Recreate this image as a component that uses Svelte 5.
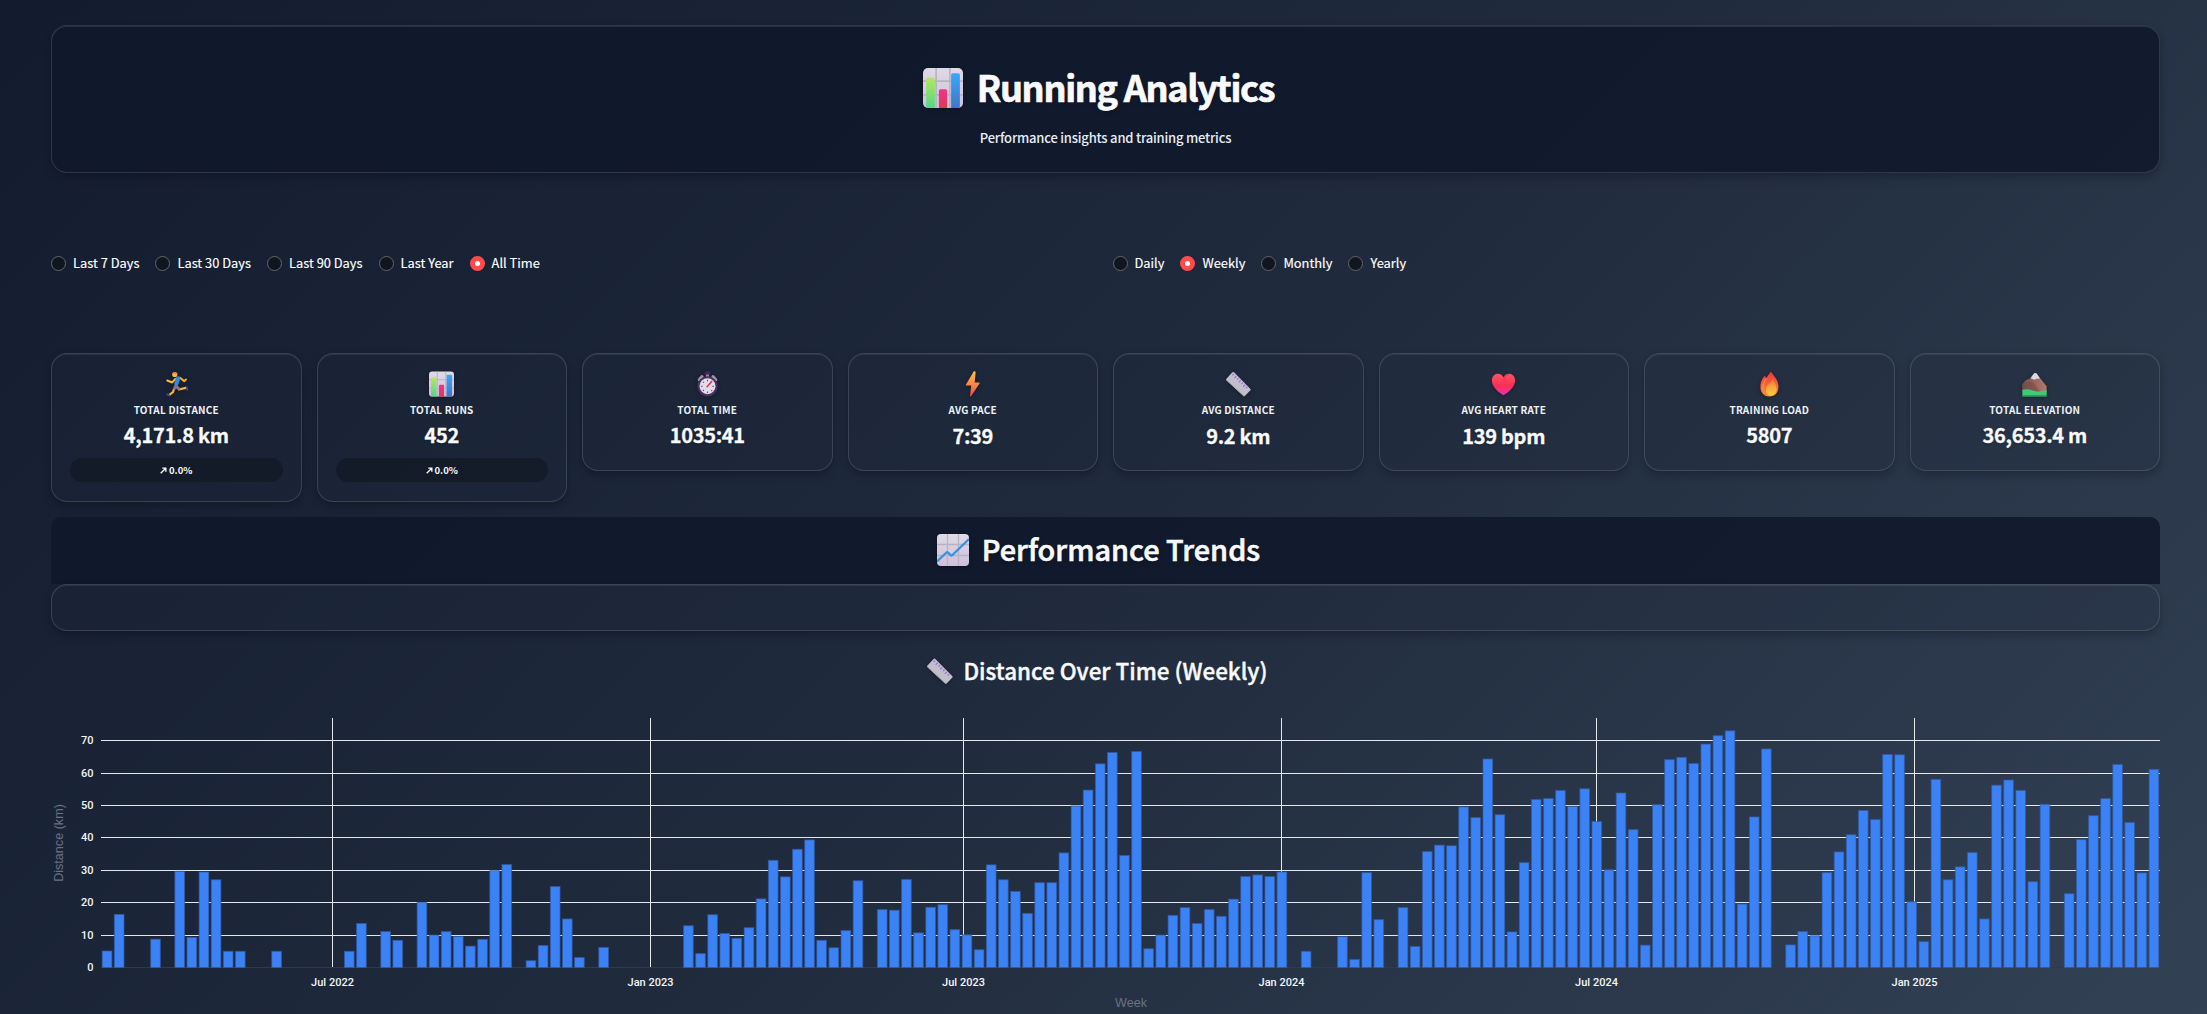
<script>
  const ranges = ['Last 7 Days', 'Last 30 Days', 'Last 90 Days', 'Last Year', 'All Time'];
  const periods = ['Daily', 'Weekly', 'Monthly', 'Yearly'];
  let range = $state('All Time');
  let period = $state('Weekly');

  const metrics = [
    { icon: 'runner', label: 'Total Distance', value: '4,171.8 km', trend: '0.0%' },
    { icon: 'bars', label: 'Total Runs', value: '452', trend: '0.0%' },
    { icon: 'clock', label: 'Total Time', value: '1035:41' },
    { icon: 'bolt', label: 'Avg Pace', value: '7:39', low: true },
    { icon: 'ruler', label: 'Avg Distance', value: '9.2 km', low: true },
    { icon: 'heart', label: 'Avg Heart Rate', value: '139 bpm', low: true },
    { icon: 'fire', label: 'Training Load', value: '5807' },
    { icon: 'mountain', label: 'Total Elevation', value: '36,653.4 m' }
  ];

  // Weekly distance in km, one entry per week
  const weeks = [
    5.1, 16.4, 0, 0, 8.75, 0, 29.7, 9.3, 29.5, 27.1, 5, 5, 0, 0, 5, 0, 0, 0, 0, 0,
    5, 13.6, 0, 11.1, 8.4, 0, 20.1, 10, 11.1, 9.6, 6.6, 8.7, 29.9, 31.8, 0, 2.1, 6.8, 25, 15, 3.1,
    0, 6.2, 0, 0, 0, 0, 0, 0, 12.9, 4.3, 16.3, 10.5, 9, 12.3, 21.2, 33.1, 28, 36.5, 39.4, 8.4,
    6.1, 11.4, 26.8, 0, 17.9, 17.7, 27.2, 10.7, 18.6, 19.4, 11.7, 10.1, 5.5, 31.7, 27.1, 23.5, 16.7, 26.2, 26.2, 35.4,
    49.9, 54.8, 62.9, 66.4, 34.6, 66.7, 5.8, 10, 16.1, 18.5, 13.6, 17.9, 15.8, 21.1, 28.1, 28.6, 28.1, 29.5, 0, 5,
    0, 0, 9.5, 2.5, 29.3, 14.8, 0, 18.5, 6.5, 35.8, 37.8, 37.6, 49.6, 46.3, 64.4, 47.2, 11, 32.4, 51.9, 52.2,
    54.7, 49.8, 55.2, 45.1, 30.2, 53.9, 42.6, 6.9, 50.3, 64.2, 64.9, 63, 69, 71.6, 73.1, 19.6, 46.5, 67.5, 0, 7,
    11.1, 9.8, 29.3, 35.7, 41, 48.5, 45.7, 65.8, 65.7, 20.3, 8, 58.1, 27.1, 31.1, 35.5, 15, 56.3, 57.9, 54.7, 26.5,
    50.4, 0, 22.8, 39.5, 46.9, 52.2, 62.7, 44.8, 29.2, 61.2
  ];
  const left = 50;
  const right = 2109;
  const base = 267;
  const perKm = 32.38 / 10;
  const step = (right - left) / weeks.length;
  const barWidth = step * 0.8;
  const yTicks = [0, 10, 20, 30, 40, 50, 60, 70];
  const xTicks = [
    { x: 281.5, label: 'Jul 2022' },
    { x: 599.5, label: 'Jan 2023' },
    { x: 912.5, label: 'Jul 2023' },
    { x: 1230.5, label: 'Jan 2024' },
    { x: 1545.5, label: 'Jul 2024' },
    { x: 1863.5, label: 'Jan 2025' }
  ];
</script>

<svg class="defs" aria-hidden="true">
  <defs>
    <linearGradient id="paper" x1="0" y1="0" x2="0" y2="1"><stop offset="0" stop-color="#dfdae6" /><stop offset="1" stop-color="#cfc0dc" /></linearGradient>
    <linearGradient id="green" x1="0" y1="0" x2="0" y2="1"><stop offset="0" stop-color="#b5e85a" /><stop offset="1" stop-color="#52d68b" /></linearGradient>
    <linearGradient id="pink" x1="0" y1="0" x2="0" y2="1"><stop offset="0" stop-color="#ee3390" /><stop offset="1" stop-color="#de3a55" /></linearGradient>
    <linearGradient id="blue" x1="0" y1="0" x2="0" y2="1"><stop offset="0" stop-color="#3aa7fb" /><stop offset="1" stop-color="#3e76c9" /></linearGradient>
    <linearGradient id="bolt" x1="0" y1="0" x2="0" y2="1"><stop offset="0" stop-color="#ffc03f" /><stop offset=".55" stop-color="#fb8446" /><stop offset="1" stop-color="#ee4350" /></linearGradient>
    <linearGradient id="heart" x1="0" y1="0" x2="0" y2="1"><stop offset="0" stop-color="#ff5560" /><stop offset=".55" stop-color="#fb2f55" /><stop offset="1" stop-color="#ee2fae" /></linearGradient>
    <linearGradient id="fire" x1="0" y1="0" x2="0" y2="1"><stop offset="0" stop-color="#f0363c" /><stop offset="1" stop-color="#fd8f35" /></linearGradient>
    <linearGradient id="flame" x1="0" y1="0" x2="0" y2="1"><stop offset="0" stop-color="#fb7b35" /><stop offset="1" stop-color="#ffd03c" /></linearGradient>
    <linearGradient id="rock" x1="0" y1="0" x2="1" y2="0"><stop offset="0" stop-color="#75534f" /><stop offset="1" stop-color="#b8776a" /></linearGradient>
  </defs>
</svg>

{#snippet emoji(name, cls)}
  <svg class="emoji {cls}" viewBox="0 0 32 32" aria-hidden="true">
    {#if name === 'bars'}
      <rect width="32" height="32" rx="4" fill="url(#paper)" />
      <path d="M10.5 0v32M21.5 0v32M0 10.5h32M0 21.5h32" stroke="#b9b2bf" stroke-width="1.3" />
      <path d="M2.5 9a1.3 1.3 0 0 1 1.3-1.3h4.4A1.3 1.3 0 0 1 9.5 9v23H4a1.5 1.5 0 0 1-1.5-1.5z" fill="url(#green)" />
      <path d="M12.7 18.2a1.3 1.3 0 0 1 1.3-1.3h4a1.3 1.3 0 0 1 1.3 1.3V32h-6.6z" fill="url(#pink)" />
      <path d="M22.5 5.5A1.3 1.3 0 0 1 23.8 4.2h4.4a1.3 1.3 0 0 1 1.3 1.3v25A1.5 1.5 0 0 1 28 32h-5.5z" fill="url(#blue)" />
    {:else if name === 'trend'}
      <rect width="32" height="32" rx="4" fill="url(#paper)" />
      <path d="M10.5 0v32M21.5 0v32M0 10.5h32M0 21.5h32" stroke="#b9b2bf" stroke-width="1.3" />
      <path d="M0 27.5 9.5 18.5a1 1 0 0 1 1.4 0L13.8 21.2a1 1 0 0 0 1.4 0L32 5" fill="none" stroke="#3791de" stroke-width="2.3" />
    {:else if name === 'ruler'}
      <path d="M.6 9.2 7.8 1.4a2 2 0 0 1 2.8 0L31 22a1.5 1.5 0 0 1 0 2.2l-6.6 6.8a1.8 1.8 0 0 1-2.6 0L.6 11.4a1.6 1.6 0 0 1 0-2.2z" fill="#c3bfca" />
      <path d="M.6 10.8 22 30.2a1.5 1.5 0 0 0 2 .2" fill="none" stroke="#aaa3b3" stroke-width="1.2" />
      <path d="m10 3-1.8 2m5 .8-2.6 2.6m5.4.2-1.8 1.9m4.6.9-2.6 2.6m5.4.2-1.8 1.9m4.6.9-2.6 2.6m5.4.2-1.8 1.9" stroke="#9a6fe0" stroke-width="1.5" />
    {:else if name === 'runner'}
      <g fill="none" stroke-linecap="round" stroke-linejoin="round">
        <path d="m20.5 8 5.3 4.3 2.4-2" stroke="#f6a92e" stroke-width="2.6" />
        <path d="m14.5 9.5-4 4.5-6.3-2.5" stroke="#fdb93b" stroke-width="2.6" />
        <path d="m19 23 9-2" stroke="#f9b437" stroke-width="2.8" />
        <path d="m12.5 23-1 3.5-4.3 3" stroke="#f9b437" stroke-width="2.8" />
        <path d="m29 20 .8 3.600M4 29.300l3 1.500" stroke="#53459c" stroke-width="2.2" />
        <path d="m18 8.800-2.200 6.700" stroke="#3089e0" stroke-width="5.6" />
        <path d="m15 18.500-1.500 3m2-3 3.300 3.500" stroke="#817594" stroke-width="3.8" />
      </g>
      <circle cx="13.8" cy="3.8" r="3.3" fill="#fdb93b" />
      <path d="M10.8 3c.6-3.300 5.800-3.300 6.400.2-1.800.8-4.600-.9-6.400-.2z" fill="#d99030" />
    {:else if name === 'clock'}
      <rect x="12.5" y="0" width="7" height="4.5" rx="1.2" fill="#48245f" />
      <rect x="14" y="4" width="4" height="4" fill="#928a9b" />
      <path d="m5.5 10.500 3.500-4m17.500 4-3.500-4" stroke="#9d94a8" stroke-width="4" stroke-linecap="round" />
      <circle cx="16" cy="19" r="13" fill="#4b2f63" />
      <circle cx="16" cy="18.8" r="10.2" fill="#e1dce9" />
      <path d="M16 10.500v2M16 25.500v2M7.800 19h2M22.200 19h2M10.200 13.200l1.200 1.200M20.800 23.800l1.200 1.200M10.200 24.800l1.200-1.200" stroke="#5a4670" stroke-width="1.3" />
      <path d="m15.500 19.500 6-7" stroke="#ef3158" stroke-width="2" stroke-linecap="round" />
    {:else if name === 'bolt'}
      <path d="M17.500 0 7.500 17a.7.7 0 0 0 .6 1h6.300L12.800 31c-.1 1 .9 1.400 1.500.5L25 15.300a.8.8 0 0 0-.7-1.300h-5.500L20 1.300C20.100 0 18.400-.8 17.500 0z" fill="url(#bolt)" />
    {:else if name === 'heart'}
      <path d="M16 7.500C18 3.800 21 2.500 24.200 3c4.500.6 7.400 5 6.500 10.500C29.500 20.600 22.500 26.500 16 30.500 9.500 26.500 2.500 20.600 1.300 13.500.4 8 3.300 3.600 7.800 3 11 2.500 14 3.800 16 7.500z" fill="url(#heart)" />
      <path d="M16 7.500C18 3.800 21 2.500 24.200 3c-3 2-5.200 4-8.200 8z" fill="#c9224d" opacity=".45" />
    {:else if name === 'fire'}
      <path d="M17.500 0c-.8 2.500-4 5-5.500 8.500L10 5.500C5.500 10 4 15.500 4.500 21.500 5 28 10 32 16 32c7 0 11.500-5 11.500-12.500C27.500 11 22 6.500 17.500 0z" fill="url(#fire)" />
      <path d="M20 10c-1.500 4-6 5.500-8 10.500-2.200 6 .5 10.500 5 10.500 5.500 0 8.500-4 8-9.500-.4-4.500-3-7.500-5-11.500z" fill="url(#flame)" />
      <path d="M12 9c-3 4-5 8-4.500 14" fill="none" stroke="#ff9a5c" stroke-width="1.2" />
    {:else if name === 'mountain'}
      <path d="m.5 16 5-5.500 4-1L15 3.300a2.400 2.400 0 0 1 4 0L31.500 19v8H.5z" fill="url(#rock)" />
      <path d="M10 12.500 16 16l8 10.500H.5V16l4-1.500z" fill="#6d4643" opacity=".45" />
      <path d="M11 8.500 15 3a2.400 2.400 0 0 1 4 0l4 6-4.500.2-2.500 1.300z" fill="#dcd7e4" />
      <path d="M.5 23.500C9 20.500 16 26.500 22 25.500c4-.7 6-2 9.500-1.500v8H.5z" fill="#3dcb78" />
      <path d="M.5 30.500h31V32H.5z" fill="#258850" />
    {/if}
  </svg>
{/snippet}

{#snippet radios(options, selected, pick)}
  <div class="radios" role="radiogroup">
    {#each options as option}
      <button class="radio" class:on={option === selected} role="radio" aria-checked={option === selected} onclick={() => pick(option)}>
        <span class="dot"></span>{option}
      </button>
    {/each}
  </div>
{/snippet}

<main>
  <header class="hero">
    <h1>{@render emoji('bars', 'xl')}<span>Running Analytics</span></h1>
    <p>Performance insights and training metrics</p>
  </header>

  <section class="filters">
    {@render radios(ranges, range, (v) => (range = v))}
    {@render radios(periods, period, (v) => (period = v))}
  </section>

  <section class="metrics">
    {#each metrics as m}
      <article class="metric" class:low={m.low}>
        {@render emoji(m.icon, 'sm')}
        <span class="label">{m.label}</span>
        <strong>{m.value}</strong>
        {#if m.trend}
          <span class="trend">
            <svg viewBox="0 0 8 8"><path d="M.8 7.2 6 2M2.6 1.3h4.1v4.1" /></svg>{m.trend}
          </span>
        {/if}
      </article>
    {/each}
  </section>

  <h2>{@render emoji('trend', 'lg')}<span>Performance Trends</span></h2>
  <div class="panel"></div>

  <h3>{@render emoji('ruler', 'md')}<span>Distance Over Time (Weekly)</span></h3>
  <svg class="chart" viewBox="0 0 2109 314">
    {#each yTicks as t}
      {#if t > 0}
        <rect class="grid" x={left} y={Math.round(base - t * perKm)} width={right - left} height="1" />
      {/if}
      <text class="tick" x="42.5" y={base - t * perKm + 4} text-anchor="end">{t}</text>
    {/each}
    <rect class="zero" x={left} y={base} width={right - left} height="1" />
    {#each xTicks as t}
      <rect class="grid" x={t.x - 0.5} y="18" width="1" height={base - 18} />
      <text class="tick" x={t.x} y="286" text-anchor="middle">{t.label}</text>
    {/each}
    {#each weeks as km, i}
      {#if km > 0}
        <rect class="bar" x={left + step * i + (step - barWidth) / 2} y={base + 0.5 - km * perKm} width={barWidth} height={km * perKm} />
      {/if}
    {/each}
    <text class="axis" x="1080" y="307" text-anchor="middle">Week</text>
    <text class="axis" transform="translate(12 143) rotate(-90)" text-anchor="middle">Distance (km)</text>
  </svg>
</main>

<style>
  :global(body) {
    margin: 0;
    overflow: hidden;
    background: #1e293b;
  }
  main {
    box-sizing: border-box;
    height: 1014px;
    overflow: hidden;
    padding: 25px 47px 0 51px;
    background: linear-gradient(135deg, #131c2f 0%, #1f2a3c 50%, #334155 100%);
    color: #f8fafc;
    font-family: 'Noto Sans CJK JP', 'Noto Sans', sans-serif;
  }
  .defs {
    position: absolute;
    width: 0;
    height: 0;
  }
  .emoji {
    display: block;
    flex: none;
    filter: drop-shadow(0 1px 2px rgba(0, 0, 0, 0.3));
  }
  .xl { width: 40px; height: 40px; }
  .lg { width: 32px; height: 32px; }
  .md { width: 26px; height: 26px; }
  .sm { width: 25px; height: 26px; }
  h1, h2, h3, p { margin: 0; }
  h1, h2, h3 {
    display: flex;
    align-items: center;
    justify-content: center;
  }
  h1 span { margin-top: -5px; }
  h2 span { margin-top: -4px; }
  h3 span { margin-top: -2px; }
  .hero {
    box-sizing: border-box;
    height: 148px;
    padding-top: 40px;
    border: 1px solid rgba(148, 163, 184, 0.22);
    border-radius: 16px;
    background: rgba(15, 23, 42, 0.85);
    box-shadow: 0 4px 8px rgba(0, 0, 0, 0.25), inset 0 1px 0 rgba(255, 255, 255, 0.1);
    text-align: center;
  }
  h1 {
    gap: 14px;
    height: 44px;
    padding-right: 14px;
    font-size: 36px;
    font-weight: 700;
    letter-spacing: -1.3px;
    line-height: 44px;
    -webkit-text-stroke: 0.7px #f8fafc;
    text-shadow: 0 2px 4px rgba(0, 0, 0, 0.3);
  }
  .hero p {
    margin-top: 18px;
    font-size: 13px;
    font-weight: 500;
    letter-spacing: -0.2px;
    line-height: 20px;
    color: #e8edf3;
  }
  .filters {
    display: grid;
    grid-template-columns: 1fr 1fr;
    gap: 14px;
    margin-top: 80px;
  }
  .radios {
    display: flex;
    gap: 16px;
    height: 20px;
  }
  .radio {
    display: flex;
    align-items: center;
    gap: 7px;
    padding: 0;
    border: 0;
    background: none;
    color: #fff;
    font: 400 12.85px/20px 'Noto Sans CJK JP', 'Noto Sans', sans-serif;
    -webkit-text-stroke: 0.15px #fff;
    white-space: nowrap;
  }
  .dot {
    box-sizing: border-box;
    width: 15px;
    height: 15px;
    border: 1px solid #62656d;
    border-radius: 50%;
    background: #10151f;
  }
  .on .dot {
    border: 5px solid #ff4b4b;
    background: #fff;
  }
  .metrics {
    display: grid;
    grid-template-columns: repeat(8, 1fr);
    align-items: start;
    gap: 15px;
    height: 148px;
    margin-top: 80px;
  }
  .metric {
    box-sizing: border-box;
    display: flex;
    flex-direction: column;
    align-items: center;
    min-height: 118px;
    padding: 17px 18px;
    border: 1px solid rgba(148, 163, 184, 0.24);
    border-radius: 16px;
    background: rgba(30, 41, 59, 0.25);
    box-shadow: 0 4px 8px rgba(0, 0, 0, 0.25), inset 0 1px 0 rgba(255, 255, 255, 0.08);
  }
  .label {
    margin-top: 5px;
    font-size: 10px;
    font-weight: 700;
    letter-spacing: 0.2px;
    line-height: 16px;
    text-transform: uppercase;
    color: #eef2f6;
  }
  strong {
    margin-top: 3px;
    font-size: 20px;
    font-weight: 700;
    letter-spacing: -0.3px;
    line-height: 28px;
    -webkit-text-stroke: 0.3px #f8fafc;
    text-shadow: 0 1px 2px rgba(0, 0, 0, 0.3);
  }
  .low strong { margin-top: 4px; }
  .trend {
    display: flex;
    align-items: center;
    align-self: stretch;
    justify-content: center;
    gap: 2px;
    height: 24px;
    margin: 9px 0 2px;
    border-radius: 12px;
    background: rgba(15, 20, 30, 0.55);
    font-size: 9.5px;
    font-weight: 700;
  }
  .trend svg {
    width: 7px;
    height: 7px;
    fill: none;
    stroke: #f8fafc;
    stroke-width: 1.5;
  }
  h2 {
    box-sizing: border-box;
    gap: 13px;
    height: 67px;
    margin-top: 16px;
    padding: 0 14px 2px 0;
    border-radius: 10px 10px 0 0;
    background: rgba(15, 23, 42, 0.85);
    font-size: 28.9px;
    font-weight: 500;
    line-height: 40px;
    -webkit-text-stroke: 0.6px #f8fafc;
    text-shadow: 0 2px 4px rgba(0, 0, 0, 0.3);
  }
  .panel {
    box-sizing: border-box;
    height: 47px;
    border: 1px solid rgba(148, 163, 184, 0.24);
    border-radius: 16px;
    background: rgba(30, 41, 59, 0.25);
    box-shadow: 0 4px 8px rgba(0, 0, 0, 0.25), inset 0 1px 0 rgba(255, 255, 255, 0.08);
  }
  h3 {
    gap: 10px;
    height: 40px;
    margin-top: 20px;
    padding-right: 16px;
    font-size: 22.4px;
    font-weight: 500;
    line-height: 40px;
    -webkit-text-stroke: 0.4px #f8fafc;
  }
  .chart {
    display: block;
    width: 2109px;
    height: 314px;
    margin-top: 9px;
  }
  .grid { fill: #e5e7eb; }
  .zero { fill: #33384a; }
  .bar {
    fill: #3b82f6;
    stroke: #34599c;
    stroke-width: 1;
    stroke-opacity: 0.7;
  }
  .tick {
    fill: #f1f5f9;
    font: 500 11px Roboto, sans-serif;
  }
  .axis {
    fill: #6b7280;
    font: 12.6px 'Liberation Sans', sans-serif;
  }
</style>
